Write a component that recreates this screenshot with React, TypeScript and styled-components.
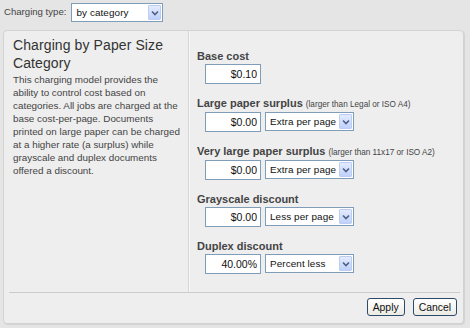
import React from 'react';
import styled, { createGlobalStyle } from 'styled-components';

const GlobalStyle = createGlobalStyle`
    html, body {
        margin: 0;
        padding: 0;
        background: #e5e5e5;
    }
    body {
        width: 470px;
        height: 328px;
        overflow: hidden;
        font-family: 'Liberation Sans', Arial, sans-serif;
        color: #333;
    }
`;

const Page = styled.div`
    width: 470px;
    height: 328px;
    display: flex;
    flex-direction: column;
`;

const TopBar = styled.div`
    height: 30px;
    display: flex;
    align-items: flex-start;
    padding: 3px 0 0 4px;
    box-sizing: border-box;
    gap: 5px;
`;

const TopLabel = styled.span`
    font-size: 9.6px;
    color: #444;
    line-height: 18px;
`;

const SelectBox = styled.div<{ $width: number }>`
    width: ${({ $width }) => $width}px;
    height: 19px;
    box-sizing: border-box;
    border: 1px solid #7f9db9;
    background: #fff;
    display: flex;
    align-items: center;
    padding: 0 1px 0 4px;
    font-size: 9.9px;
    letter-spacing: 0.1px;
    color: #111;
`;

const SelectText = styled.span`
    flex: 1;
    min-width: 0;
    white-space: nowrap;
    overflow: visible;
`;

const ArrowButton = styled.span`
    flex-shrink: 0;
    width: 13px;
    height: 15px;
    box-sizing: border-box;
    border: 1px solid #bccdf5;
    border-radius: 1px;
    background: linear-gradient(#e3ebfd, #bfd1fa);
    display: flex;
    align-items: center;
    justify-content: center;
`;

const Panel = styled.div`
    margin-left: 3px;
    width: 461px;
    height: 294px;
    box-sizing: border-box;
    background: #eeeeee;
    border: 1px solid #d2d2d2;
    border-radius: 4px;
    box-shadow: 1px 1px 1px rgba(0, 0, 0, 0.08);
    display: flex;
    flex-direction: column;
`;

const PanelBody = styled.div`
    height: 261px;
    display: flex;
`;

const InfoColumn = styled.div`
    width: 185px;
    box-sizing: border-box;
    padding: 5px 6px 0 9px;
    border-right: 1px solid #d6d6d6;
    box-shadow: 1px 0 0 #f8f8f8;
`;

const Title = styled.h2`
    margin: 0 0 1px;
    font-size: 14px;
    line-height: 18px;
    font-weight: normal;
    letter-spacing: 0.1px;
    color: #333;
`;

const Description = styled.p`
    margin: 0;
    font-size: 9.85px;
    line-height: 13px;
    color: #444;
`;

const SettingsColumn = styled.div`
    flex: 1;
    padding: 19px 0 0 8px;
`;

const Field = styled.div`
    margin-bottom: 13px;
`;

const FieldLabel = styled.div`
    font-size: 11px;
    line-height: 13px;
    font-weight: bold;
    color: #444;
`;

const Hint = styled.span`
    font-size: 8.2px;
    font-weight: normal;
`;

const FieldRow = styled.div`
    display: flex;
    gap: 4px;
    padding-left: 8px;
    margin-top: 1px;
`;

const AmountInput = styled.input`
    width: 56px;
    height: 20px;
    box-sizing: border-box;
    border: 1px solid #7f9db9;
    background: #fff;
    margin: 0;
    padding: 0 3px 0 0;
    text-align: right;
    font-family: 'Liberation Sans', Arial, sans-serif;
    font-size: 10.5px;
    color: #111;
    outline: none;
`;

const Footer = styled.div`
    margin: 0 3px 0 5px;
    border-top: 1px solid #cbcbcb;
    display: flex;
    justify-content: flex-end;
    gap: 8px;
    padding: 5px 3px 0 0;
`;

const Button = styled.button`
    height: 18px;
    box-sizing: border-box;
    padding: 0 5px;
    border: 1px solid #2d4a68;
    border-radius: 3px;
    background: linear-gradient(#ffffff, #ecece6);
    font-family: 'Liberation Sans', Arial, sans-serif;
    font-size: 10.4px;
    color: #111;
    cursor: pointer;
`;

function Chevron() {
    return (
        <svg width="8" height="6" viewBox="0 0 8 6">
            <path d="M1 1.5 L4 4.5 L7 1.5" fill="none" stroke="#4d6185" strokeWidth="1.6" />
        </svg>
    );
}

function Select({ value, width }: { value: string; width: number }) {
    return (
        <SelectBox $width={width}>
            <SelectText>{value}</SelectText>
            <ArrowButton>
                <Chevron />
            </ArrowButton>
        </SelectBox>
    );
}

type FieldDef = {
    label: string;
    hint?: string;
    amount: string;
    mode?: string;
};

const fields: FieldDef[] = [
    { label: 'Base cost', amount: '$0.10' },
    { label: 'Large paper surplus', hint: '(larger than Legal or ISO A4)', amount: '$0.00', mode: 'Extra per page' },
    { label: 'Very large paper surplus', hint: '(larger than 11x17 or ISO A2)', amount: '$0.00', mode: 'Extra per page' },
    { label: 'Grayscale discount', amount: '$0.00', mode: 'Less per page' },
    { label: 'Duplex discount', amount: '40.00%', mode: 'Percent less' },
];

export default function App() {
    return (
        <Page>
            <GlobalStyle />
            <TopBar>
                <TopLabel>Charging type:</TopLabel>
                <Select value="by category" width={92} />
            </TopBar>
            <Panel>
                <PanelBody>
                    <InfoColumn>
                        <Title>
                            Charging by Paper Size
                            <br />
                            Category
                        </Title>
                        <Description>
                            This charging model provides the
                            <br />
                            ability to control cost based on
                            <br />
                            categories. All jobs are charged at the
                            <br />
                            base cost-per-page. Documents
                            <br />
                            printed on large paper can be charged
                            <br />
                            at a higher rate (a surplus) while
                            <br />
                            grayscale and duplex documents
                            <br />
                            offered a discount.
                        </Description>
                    </InfoColumn>
                    <SettingsColumn>
                        {fields.map((f) => (
                            <Field key={f.label}>
                                <FieldLabel>
                                    {f.label} {f.hint && <Hint>{f.hint}</Hint>}
                                </FieldLabel>
                                <FieldRow>
                                    <AmountInput readOnly value={f.amount} />
                                    {f.mode && <Select value={f.mode} width={89} />}
                                </FieldRow>
                            </Field>
                        ))}
                    </SettingsColumn>
                </PanelBody>
                <Footer>
                    <Button>Apply</Button>
                    <Button>Cancel</Button>
                </Footer>
            </Panel>
        </Page>
    );
}
